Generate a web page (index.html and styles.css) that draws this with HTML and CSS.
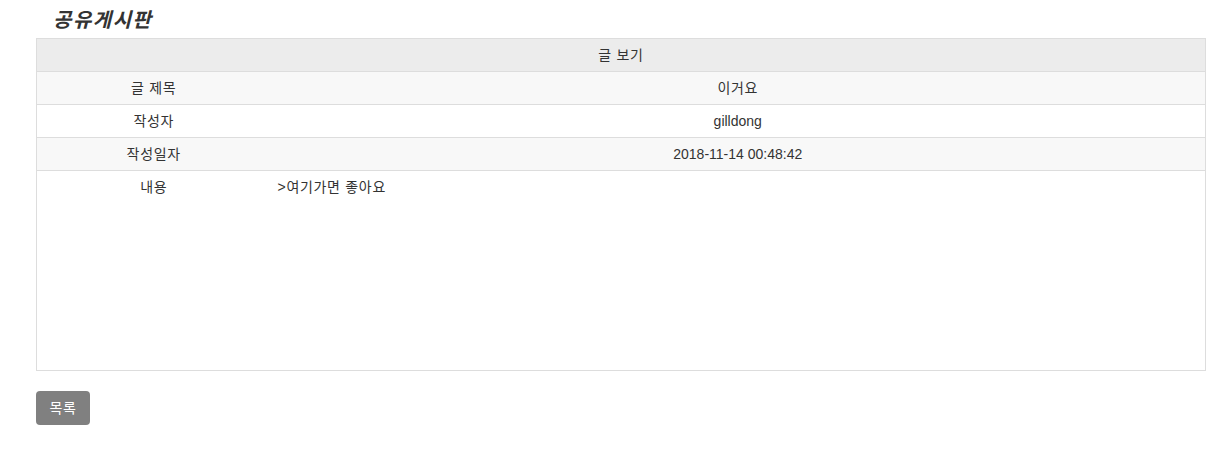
FILE: index.html
```html
<!DOCTYPE html>
<html lang="ko">
<head>
<meta charset="utf-8">
<title>공유게시판</title>
<link rel="stylesheet" href="styles.css">
</head>
<body>
<div class="page">
  <h2 class="title">공유게시판</h2>
  <table class="board">
    <colgroup>
      <col class="col-label">
      <col class="col-value">
    </colgroup>
    <thead>
      <tr><th colspan="2" class="ko">글 보기</th></tr>
    </thead>
    <tbody>
      <tr class="odd"><td class="ko">글 제목</td><td class="ko">이거요</td></tr>
      <tr><td class="ko">작성자</td><td>gilldong</td></tr>
      <tr class="odd"><td class="ko">작성일자</td><td>2018-11-14 00:48:42</td></tr>
      <tr class="content-row"><td class="ko">내용</td><td class="content ko">&gt;여기가면 좋아요</td></tr>
    </tbody>
  </table>
  <a class="btn ko" href="#">목록</a>
</div>
</body>
</html>
```
FILE: styles.css
```css
html, body {
  margin: 0;
  padding: 0;
  background: #fff;
}
body {
  font-family: "Liberation Sans", "Noto Sans CJK KR", Arial, sans-serif;
  font-size: 14px;
  color: #333;
}
.page {
  padding: 0 23px 0 36px;
}
.title {
  margin: 0;
  padding: 7px 0 0 17px;
  height: 38px;
  box-sizing: border-box;
  font-size: 20px;
  line-height: 26px;
  font-weight: bold;
  font-style: italic;
  letter-spacing: 1.5px;
  color: #333;
}
.ko {
  letter-spacing: 0.7px;
}
.board {
  width: 1170px;
  border-collapse: collapse;
  border: 1px solid #ddd;
  table-layout: fixed;
}
.col-label {
  width: 234px;
}
.board th, .board td {
  border-top: 1px solid #ddd;
  padding: 6px 8px;
  height: 20px;
  line-height: 20px;
  text-align: center;
  font-weight: normal;
  vertical-align: top;
}
.board th {
  background: #ececec;
}
.board tr.odd td {
  background: #f8f8f8;
}
.content-row td {
  height: 187px;
}
.board td.content {
  text-align: left;
  padding-left: 7px;
}
.btn {
  display: inline-block;
  margin-top: 20px;
  width: 54px;
  height: 34px;
  line-height: 34px;
  text-align: center;
  background: #808080;
  color: #fff;
  border-radius: 4px;
  text-decoration: none;
  font-size: 14px;
}
```
